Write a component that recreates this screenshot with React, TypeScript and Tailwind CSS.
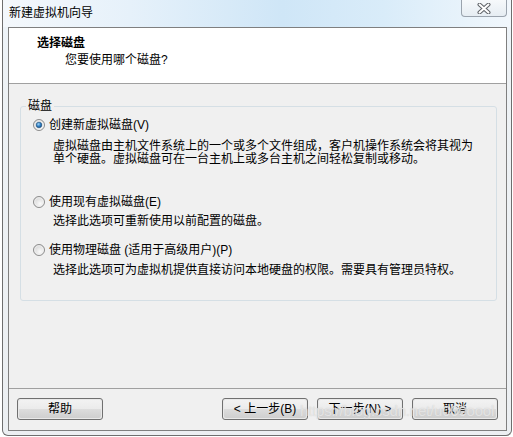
import React from 'react'

const font = "font-['Liberation_Sans','Noto_Sans_CJK_SC',sans-serif]"

export default function App() {
  return (
    <div className={`relative w-[513px] h-[437px] bg-white text-[12px] text-black ${font}`}>
      {/* Window */}
      <div className="ml-[2px] w-[510px] h-[436px] flex flex-col border-x border-b border-[#6e6e6e] rounded-b-[6px] bg-[linear-gradient(to_bottom,#eef5fb_0px,#eef2f5_80px,#eceff2_100%)]">
        {/* Title bar */}
        <div className="h-[27px] shrink-0 flex items-start justify-between pl-[6px] pr-[4px] bg-[linear-gradient(to_right,#f4f8fc_0%,#e6f1fa_25%,#cfe6f7_55%,#d9ecf9_75%,#f1f7fc_100%)]">
          <span className="pt-[5px] leading-[16px]">新建虚拟机向导</span>
          <CloseButton />
        </div>

        {/* Frame body */}
        <div className="flex-1 flex pl-[5px] pr-[4px] pb-[4px]">
          <div className="flex-1 flex flex-col border border-[#7f7f7f] bg-[#f0f0f0]">
            {/* Header */}
            <div className="h-[56px] shrink-0 bg-white border-b border-[#a0a0a0]">
              <div className="pl-[28px] pt-[7px] leading-[16px] font-bold">选择磁盘</div>
              <div className="pl-[56px] mt-[1px] leading-[16px]">您要使用哪个磁盘?</div>
            </div>

            {/* Group box */}
            <div className="relative mt-[22px] ml-[11px] mr-[9px] border border-[#d5dfe5] rounded-[3px] pl-[12px] pt-[10px] pb-[23px]">
              <span className="absolute left-[5px] top-[-9px] px-[2px] leading-[16px] bg-[#f0f0f0]">磁盘</span>

              <Option checked label="创建新虚拟磁盘(V)" />
              <div className="mt-[7px] ml-[20px] leading-[13px]">
                <div>虚拟磁盘由主机文件系统上的一个或多个文件组成，客户机操作系统会将其视为</div>
                <div>单个硬盘。虚拟磁盘可在一台主机上或多台主机之间轻松复制或移动。</div>
              </div>

              <div className="mt-[28px]">
                <Option label="使用现有虚拟磁盘(E)" />
              </div>
              <div className="mt-[5px] ml-[20px] leading-[13px]">选择此选项可重新使用以前配置的磁盘。</div>

              <div className="mt-[14px]">
                <Option label="使用物理磁盘 (适用于高级用户)(P)" />
              </div>
              <div className="mt-[6px] ml-[20px] leading-[13px]">
                选择此选项可为虚拟机提供直接访问本地硬盘的权限。需要具有管理员特权。
              </div>
            </div>

            {/* Bottom buttons */}
            <div className="mt-auto h-[42px] shrink-0 border-t border-[#a0a0a0] flex items-start justify-between pl-[8px] pr-[8px] pt-[9px]">
              <WinButton label="帮助" />
              <div className="flex gap-[9px]">
                <WinButton label="< 上一步(B)" />
                <WinButton label="下一步(N) >" />
                <WinButton label="取消" />
              </div>
            </div>
          </div>
        </div>
      </div>

      {/* watermark */}
      <span className="absolute left-[300px] top-[402px] text-[15px] leading-[18px] tracking-[-0.2px] text-white/50 [text-shadow:0_0_1px_#c4c4c4] pointer-events-none">
        https://blog.csdn.net/u000oool
      </span>
    </div>
  )
}

function CloseButton() {
  return (
    <div className="w-[46px] h-[17px] flex items-center justify-center border-x border-b border-[#9aa3ad] rounded-b-[4px] bg-[linear-gradient(to_bottom,#f6f9fb,#e6edf3)]">
      <svg width="14" height="11" viewBox="0 0 14 11">
        <path d="M2.5 1.5 L11.5 9.5 M11.5 1.5 L2.5 9.5" stroke="#5d6166" strokeWidth="4" strokeLinecap="round" />
        <path d="M2.5 1.5 L11.5 9.5 M11.5 1.5 L2.5 9.5" stroke="#ffffff" strokeWidth="2" strokeLinecap="round" />
      </svg>
    </div>
  )
}

function Option({ label, checked = false }: { label: string; checked?: boolean }) {
  return (
    <div className="h-[16px] flex items-center gap-[4px]">
      <RadioMark checked={checked} />
      <span className="leading-[16px]">{label}</span>
    </div>
  )
}

function RadioMark({ checked }: { checked: boolean }) {
  const id = checked ? 'on' : 'off'
  return (
    <svg width="12" height="12" viewBox="0 0 12 12" className="shrink-0">
      <defs>
        <radialGradient id={`rb-${id}`} cx="0.6" cy="0.65" r="0.6">
          <stop offset="0%" stopColor="#fbfbfb" />
          <stop offset="100%" stopColor="#d6d6d6" />
        </radialGradient>
        <radialGradient id={`rd-${id}`} cx="0.4" cy="0.35" r="0.7">
          <stop offset="0%" stopColor="#9fd4f7" />
          <stop offset="55%" stopColor="#2f7ec4" />
          <stop offset="100%" stopColor="#174e7e" />
        </radialGradient>
      </defs>
      <circle cx="6" cy="6" r="5.5" fill={`url(#rb-${id})`} stroke="#8d8d8d" strokeWidth="1" />
      <circle cx="6" cy="6" r="4.2" fill="none" stroke="#f4f4f4" strokeWidth="0.8" />
      {checked && <circle cx="6" cy="6" r="2.8" fill={`url(#rd-${id})`} stroke="#1d4d78" strokeWidth="0.6" />}
    </svg>
  )
}

function WinButton({ label }: { label: string }) {
  return (
    <div className="w-[86px] h-[22px] rounded-[3px] border border-[#707070] p-[1px] bg-[#e9e9e9]">
      <div className="h-full rounded-[2px] flex items-center justify-center leading-[16px] bg-[linear-gradient(to_bottom,#f2f2f2_0%,#ebebeb_50%,#dddddd_51%,#cfcfcf_100%)]">
        {label}
      </div>
    </div>
  )
}
